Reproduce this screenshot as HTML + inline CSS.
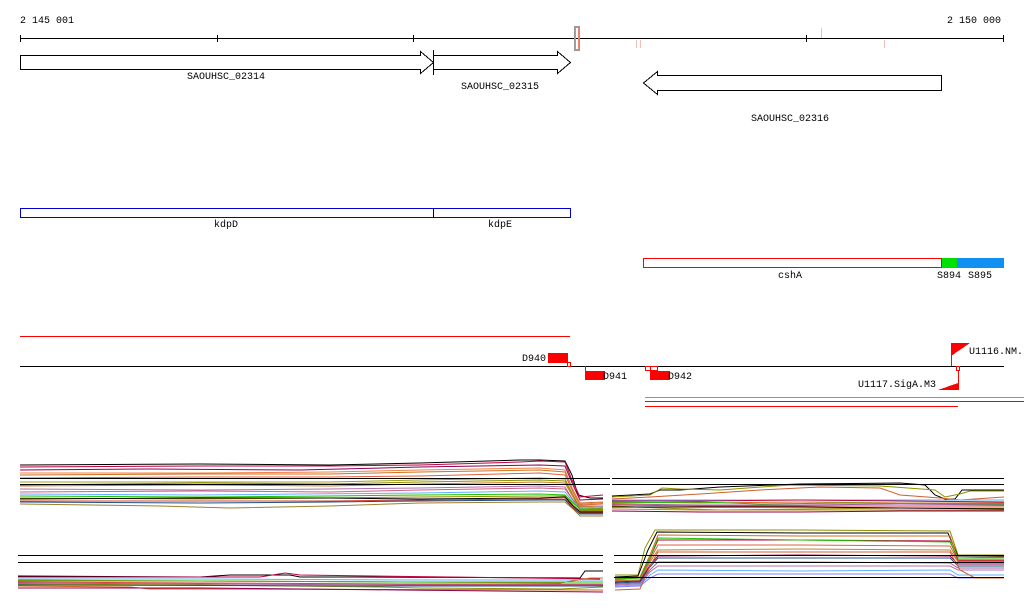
<!DOCTYPE html>
<html><head><meta charset="utf-8"><style>
body{margin:0;background:#fff;width:1024px;height:611px;overflow:hidden}
svg{display:block}
text{font-family:"Liberation Mono","DejaVu Sans Mono",monospace;font-size:10px;fill:#000}
</style></head><body>
<svg width="1024" height="611" viewBox="0 0 1024 611" xmlns="http://www.w3.org/2000/svg" shape-rendering="crispEdges">
<text x="20" y="23">2 145 001</text>
<text x="1001" y="23" text-anchor="end">2 150 000</text>
<line x1="20" y1="38.5" x2="1004" y2="38.5" stroke="#000"/>
<g stroke="#000"><line x1="20.5" y1="35" x2="20.5" y2="42"/><line x1="217.5" y1="35" x2="217.5" y2="42"/><line x1="413.5" y1="35" x2="413.5" y2="42"/><line x1="806.5" y1="35" x2="806.5" y2="42"/><line x1="1003.5" y1="35" x2="1003.5" y2="42"/></g>
<rect x="574.5" y="26.5" width="5" height="24" fill="none" stroke="#999"/>
<rect x="575.5" y="27.5" width="3" height="22" fill="none" stroke="#f08070"/>
<g stroke="#f0c0b8"><line x1="636.5" y1="40" x2="636.5" y2="48"/><line x1="640.5" y1="40" x2="640.5" y2="48"/><line x1="821.5" y1="28" x2="821.5" y2="38"/><line x1="884.5" y1="40" x2="884.5" y2="48"/></g>
<g fill="none" stroke="#000">
<path d="M20.5 55.5H420.5V51.5L433.5 62.5L420.5 73.5V69.5H20.5Z"/>
<path d="M433.5 55.5H557.5V51.5L570.5 62.5L557.5 73.5V69.5H433.5Z"/>
<line x1="433.5" y1="50" x2="433.5" y2="75"/>
<path d="M941.5 75.5H657.5V71.5L643.5 83L657.5 94.5V90.5H941.5Z"/>
</g>
<text x="226" y="79" text-anchor="middle">SAOUHSC_02314</text>
<text x="500" y="89" text-anchor="middle">SAOUHSC_02315</text>
<text x="790" y="121" text-anchor="middle">SAOUHSC_02316</text>
<rect x="20.5" y="208.5" width="550" height="9" fill="none" stroke="#00c"/>
<line x1="433.5" y1="208" x2="433.5" y2="218" stroke="#000"/>
<text x="226" y="227" text-anchor="middle">kdpD</text>
<text x="500" y="227" text-anchor="middle">kdpE</text>
<rect x="643.5" y="258.5" width="298" height="9" fill="none" stroke="#f00"/>
<rect x="942" y="258" width="15" height="10" fill="#00e000"/>
<rect x="957" y="258" width="47" height="10" fill="#1090f0"/>
<text x="790" y="278" text-anchor="middle">cshA</text>
<text x="949" y="278" text-anchor="middle">S894</text>
<text x="980" y="278" text-anchor="middle">S895</text>
<line x1="20" y1="336.5" x2="570" y2="336.5" stroke="#f00"/>
<line x1="20" y1="366.5" x2="1004" y2="366.5" stroke="#000"/>
<rect x="548" y="353" width="20" height="10" fill="#f00"/>
<rect x="567.5" y="362.5" width="3" height="4" fill="none" stroke="#f00"/>
<text x="522" y="361">D940</text>
<line x1="585.5" y1="366" x2="585.5" y2="380" stroke="#f00"/>
<rect x="585" y="371" width="20" height="9" fill="#f00"/>
<text x="603" y="379">D941</text>
<rect x="645.5" y="366.5" width="5" height="4" fill="none" stroke="#f00"/>
<rect x="650.5" y="366.5" width="7" height="4" fill="none" stroke="#f00"/>
<rect x="650" y="371" width="20" height="9" fill="#f00"/>
<text x="668" y="379">D942</text>
<line x1="951.5" y1="343" x2="951.5" y2="366" stroke="#f00"/>
<path d="M951 343H970L951 356Z" fill="#f00"/>
<text x="969" y="354">U1116.NM.</text>
<rect x="956.5" y="366.5" width="3" height="4" fill="none" stroke="#f00"/>
<line x1="958.5" y1="370" x2="958.5" y2="390" stroke="#f00"/>
<path d="M958 383V390H938Z" fill="#f00"/>
<text x="858" y="387">U1117.SigA.M3</text>
<line x1="645" y1="397.5" x2="1024" y2="397.5" stroke="#20e020"/>
<line x1="645" y1="401.5" x2="1024" y2="401.5" stroke="#f00"/>
<line x1="645" y1="406.5" x2="958" y2="406.5" stroke="#f00"/>

<g fill="none" stroke-width="1" shape-rendering="auto">
<!-- top-left traces -->
<polyline stroke="#000" points="20,465 200,464 330,465 420,463 520,460 540,460 565,461 572,475 578,495 590,498 603,498"/>
<polyline stroke="#c00040" points="20,467 200,466 330,466 420,465 520,462 540,461 565,462 572,480 580,497 603,495"/>
<polyline stroke="#8b0050" points="20,470 150,469 300,470 420,467 540,465 565,466 573,485 580,500 603,499"/>
<polyline stroke="#d07020" points="20,475 200,474 330,474 420,472 540,470 565,472 573,490 580,503 603,502"/>
<polyline stroke="#e06040" points="20,478 200,477 330,477 420,476 540,473 565,475 573,492 580,505 603,504"/>
<polyline stroke="#a0a020" points="20,482 200,482 330,482 420,480 540,478 565,479 573,495 580,507 603,506"/>
<polyline stroke="#c08030" points="20,486 200,485 330,486 420,484 540,482 565,483 573,497 580,509 603,508"/>
<polyline stroke="#b070b0" points="20,489 200,490 330,489 420,488 540,486 565,487 573,500 580,510 603,509"/>
<polyline stroke="#d06080" points="20,492 200,491 330,492 420,490 540,488 565,489 573,500 580,506 603,506"/>
<polyline stroke="#60b0ff" points="20,494 200,495 300,494 420,493 540,491 565,492 573,502 580,508 603,507"/>
<polyline stroke="#20c000" points="20,496 200,497 330,496 420,495 540,494 565,495 573,503 580,509 603,509"/>
<polyline stroke="#909000" points="20,498 200,499 330,498 420,497 540,496 565,496 573,505 580,511 603,511"/>
<polyline stroke="#000" points="20,499 200,498 330,498 420,499 540,498 565,497 573,506 580,512 603,512"/>
<polyline stroke="#d04030" points="20,501 200,501 330,501 420,500 540,499 565,499 573,507 580,513 603,513"/>
<polyline stroke="#205080" points="20,502 200,503 330,502 420,501 540,500 565,500 573,508 580,514 603,514"/>
<polyline stroke="#a08030" points="20,504 160,506 230,508 330,506 420,503 540,502 565,502 573,509 580,516 603,516"/>
<polyline stroke="#f08040" points="20,473 200,473 330,472 420,470 540,468 565,470 573,490 580,504 603,503"/>
<polyline stroke="#909000" points="20,485 200,483 330,484 420,482 540,480 565,481 573,495 580,510 603,510"/>
<!-- top-right -->
<polyline stroke="#000" points="612,496 650,494 660,490 680,490 720,487 800,484 900,483 925,485 935,495 945,499 955,499 962,490 1004,490"/>
<polyline stroke="#909000" points="612,497 650,495 662,488 680,489 720,490 790,485 880,486 935,490 945,497 960,494 970,491 1004,491"/>
<polyline stroke="#d06030" points="612,499 650,497 700,494 760,490 820,487 880,488 900,495 940,498 960,500 1004,497"/>
<polyline stroke="#60b0ff" points="612,500 1004,500"/>
<polyline stroke="#c00040" points="612,501 700,501 800,500 900,501 1004,502"/>
<polyline stroke="#d07020" points="612,502 700,503 800,502 900,503 1004,503"/>
<polyline stroke="#20c000" points="612,503 700,502 760,504 850,503 930,504 1004,504"/>
<polyline stroke="#a060a0" points="612,504 700,505 800,505 900,504 1004,505"/>
<polyline stroke="#e04040" points="612,505 700,506 800,506 900,506 1004,506"/>
<polyline stroke="#909000" points="612,506 660,508 720,510 800,509 900,508 1004,508"/>
<polyline stroke="#000" points="612,507 700,507 800,507 900,508 1004,509"/>
<polyline stroke="#c08030" points="612,509 700,510 800,510 900,510 1004,510"/>
<polyline stroke="#8b0050" points="612,511 700,512 800,512 900,511 1004,511"/>
<!-- bottom-left -->
<polyline stroke="#000" points="18,576 200,577 230,575 290,575 300,577 360,577 580,578 585,571 603,571"/>
<polyline stroke="#c00040" points="18,577 260,577 285,573 300,575 600,579"/>
<polyline stroke="#60b0ff" points="18,579 200,579 400,580 603,580"/>
<polyline stroke="#d07020" points="18,580 200,581 400,582 560,583 590,578 603,578"/>
<polyline stroke="#20c000" points="18,581 200,581 400,582 603,582"/>
<polyline stroke="#e04040" points="18,582 200,583 400,584 603,584"/>
<polyline stroke="#a060a0" points="18,583 200,584 400,585 603,585"/>
<polyline stroke="#909000" points="18,584 200,585 380,587 420,588 560,589 603,587"/>
<polyline stroke="#d06030" points="18,586 130,587 150,589 180,589 603,590"/>
<polyline stroke="#205080" points="18,585 400,586 603,586"/>
<polyline stroke="#8b0050" points="18,588 200,588 400,590 603,592"/>
<!-- bottom-right -->
<polyline stroke="#909000" points="615,575 638,575 645,548 655,530 700,530 800,530 950,531 958,555 1004,555"/>
<polyline stroke="#000" points="615,577 638,576 648,550 657,532 800,533 948,533 958,556 1004,556"/>
<polyline stroke="#d07020" points="615,578 640,577 650,555 658,535 800,536 950,536 958,558 1004,557"/>
<polyline stroke="#c00040" points="615,579 640,578 650,558 658,540 800,540 950,541 958,560 1004,560"/>
<polyline stroke="#20c000" points="615,579 640,578 650,558 658,538 800,540 950,542 958,558 1004,558"/>
<polyline stroke="#e06040" points="615,580 640,580 650,560 658,545 800,545 950,546 958,561 1004,561"/>
<polyline stroke="#c08030" points="615,581 640,580 650,562 658,550 800,549 950,550 958,562 1004,562"/>
<polyline stroke="#8b0050" points="615,582 640,581 650,565 658,556 800,555 950,556 958,564 1004,564"/>
<polyline stroke="#205080" points="615,583 640,582 650,567 658,558 800,558 950,558 958,566 1004,566"/>
<polyline stroke="#a060a0" points="615,584 640,583 650,570 658,562 800,562 950,563 958,568 1004,568"/>
<polyline stroke="#b070b0" points="615,585 640,584 650,572 658,566 800,566 950,566 958,570 1004,570"/>
<polyline stroke="#60b0ff" points="615,586 640,585 650,575 658,570 800,571 950,570 958,575 1004,575"/>
<polyline stroke="#8080ff" points="615,587 640,586 650,578 658,574 800,574 950,574 958,578 1004,578"/>
<polyline stroke="#d06030" points="615,590 640,589 650,566 658,552 800,552 950,552 960,570 975,578 1004,578"/>
</g>
<g stroke="#000">
<line x1="20" y1="478.5" x2="610" y2="478.5"/><line x1="20" y1="484.5" x2="610" y2="484.5"/>
<line x1="612" y1="478.5" x2="1004" y2="478.5"/><line x1="612" y1="484.5" x2="1004" y2="484.5"/>
<line x1="18" y1="555.5" x2="603" y2="555.5"/><line x1="18" y1="562.5" x2="603" y2="562.5"/>
<line x1="614" y1="555.5" x2="1004" y2="555.5"/><line x1="614" y1="562.5" x2="1004" y2="562.5"/><line x1="614" y1="577.5" x2="1004" y2="577.5"/>
</g>
</svg>
</body></html>
